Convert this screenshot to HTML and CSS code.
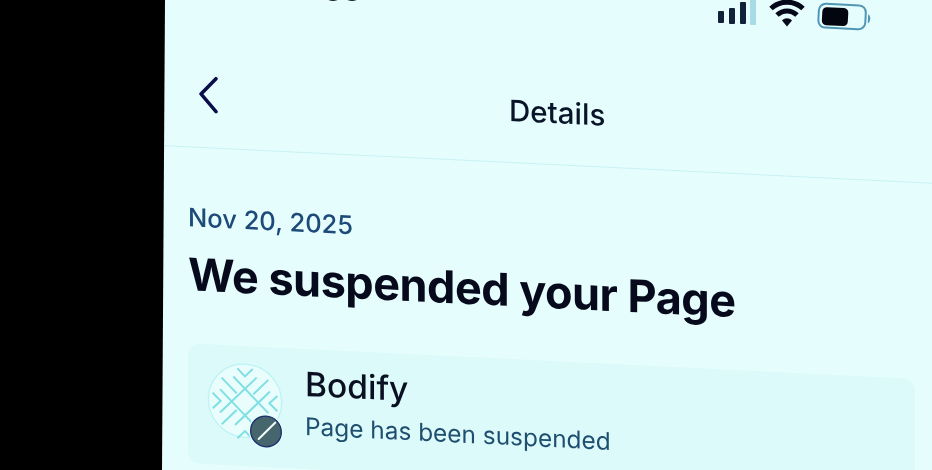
FILE: index.html
```html
<!DOCTYPE html>
<html lang="en">
<head>
<meta charset="utf-8">
<title>Details</title>
<link rel="stylesheet" href="styles.css">
</head>
<body>
<div class="screen">
  <header class="statusbar">
    <span class="time">38</span>
    <svg class="status-icons" width="160" height="34" viewBox="0 0 160 34" aria-hidden="true">
      <rect class="bar" x="0" y="10" width="6" height="12" rx="1"/>
      <rect class="bar" x="11" y="7" width="6" height="16" rx="1"/>
      <rect class="bar" x="22" y="1" width="6" height="22" rx="1"/>
      <rect class="bar-off" x="32" y="-2" width="6" height="26" rx="1"/>
      <path class="wifi" d="M53 7.5 C62 -1 76 -1 85 7.5"/>
      <path class="wifi" d="M59 14 C65 8.5 73 8.5 79 14"/>
      <path class="wifi-dot" d="M64 19.5 C67 16.5 71 16.5 74 19.5 L69 25.5 Z"/>
      <g transform="rotate(3 124 17)">
        <rect class="batt-shell" x="100.5" y="3.5" width="47" height="24" rx="7"/>
        <rect class="batt-fill" x="104" y="7" width="26" height="18" rx="4.5"/>
        <path class="batt-cap" d="M150 12 C153 13 153 20 150 21 Z"/>
      </g>
    </svg>
  </header>
  <div class="tilt">
    <nav class="nav">
      <svg class="back" width="20" height="38" viewBox="0 0 20 38" aria-hidden="true">
        <path d="M17 2 L2 18 L17 35"/>
      </svg>
      <h2 class="nav-title">Details</h2>
    </nav>
    <main class="content">
      <p class="date">Nov 20, 2025</p>
      <h1 class="headline">We suspended your Page</h1>
      <section class="card">
        <div class="avatar">
          <svg width="95" height="95" viewBox="0 0 285 285" aria-hidden="true">
            <circle class="logo-disc" cx="135" cy="128" r="110"/>
            <g class="logo-lines" transform="translate(0 -3)">
              <path d="M112 35 L135 58 L158 35"/>
              <path d="M38 112 L62 135 L38 158"/>
              <path d="M232 112 L208 135 L232 158"/>
              <path d="M112 245 L135 222 L158 245"/>
              <path d="M100 60 L205 165"/>
              <path d="M60 100 L165 205"/>
              <path d="M170 60 L60 170"/>
              <path d="M210 100 L105 205"/>
              <path d="M65 65 L110 110"/>
              <path d="M205 65 L160 110"/>
              <path d="M65 205 L110 160"/>
            </g>
            <circle class="badge-ring" cx="198" cy="217" r="52"/>
            <circle class="badge" cx="198" cy="217" r="46"/>
            <path class="badge-slash" d="M176 241 L226 189"/>
          </svg>
        </div>
        <div class="card-text">
          <h3 class="page-name">Bodify</h3>
          <p class="page-status">Page has been suspended</p>
        </div>
      </section>
    </main>
  </div>
</div>
</body>
</html>
```

FILE: styles.css
```css
* { box-sizing: border-box; }
html, body { margin: 0; height: 100%; background: #000; overflow: hidden; }
body { padding-left: 162px; font-family: Inter, "Liberation Sans", sans-serif; }

.screen {
  width: 770px;
  height: 470px;
  overflow: hidden;
  background: #e5fdfd;
  clip-path: polygon(3px 0, 100% 0, 100% 100%, 0 100%);
  filter: blur(0.45px);
}

.statusbar { height: 40px; display: flex; align-items: flex-start; overflow: hidden; padding-left: 162px; }
.time { font-size: 28px; font-weight: 700; line-height: 28px; margin-top: -23px; color: #0b1020; letter-spacing: 1px; }
.status-icons { margin-left: auto; margin-right: 54px; margin-top: 1px; overflow: visible; }
.bar { fill: #12213a; }
.bar-off { fill: #a9dbe6; }
.wifi { fill: none; stroke: #06091a; stroke-width: 5; }
.wifi-dot { fill: #06091a; }
.batt-shell { fill: none; stroke: #4f97b5; stroke-width: 2; }
.batt-fill { fill: #04060f; }
.batt-cap { fill: #4f97b5; }

.tilt { transform: skewY(2.8deg); transform-origin: 0 0; }

.nav { height: 106px; display: flex; align-items: center; padding-left: 37px; border-bottom: 1px solid #c9f1f3; }
.back { fill: none; }
.back path { fill: none; stroke: #0a0d4a; stroke-width: 3.5; stroke-linecap: round; stroke-linejoin: round; }
.nav-title { margin: 0 0 0 290px; font-size: 29.5px; font-weight: 500; color: #0a1428; }

.content { padding: 0 17px 0 26px; }
.date { margin: 54px 0 0; font-size: 25.5px; line-height: 32px; font-weight: 500; color: #1d4a78; letter-spacing: 0; }
.headline { margin: 14px 0 0; font-size: 45px; line-height: 54px; font-weight: 700; color: #070a1c; letter-spacing: -.5px; white-space: nowrap; }

.card { margin-top: 42px; height: 120px; display: flex; background: #dcfaf9; border-radius: 12px; padding: 12px 0 0 12px; }
.avatar { width: 95px; height: 95px; flex: none; }
.logo-disc { fill: #eafdfd; stroke: #bdf3f5; stroke-width: 4; }
.logo-lines path { fill: none; stroke: #7fdfe2; stroke-width: 6; }
.badge-ring { fill: #e3fcfd; }
.badge { fill: #45666c; stroke: #1c2f6e; stroke-width: 4; }
.badge-slash { stroke: #f4fbfb; stroke-width: 6; stroke-linecap: round; fill: none; }
.card-text { margin-left: 10px; }
.page-name { margin: 1px 0 0; font-size: 33.5px; line-height: 44px; font-weight: 500; color: #0a0f22; }
.page-status { margin: 4px 0 0; font-size: 24.4px; line-height: 32px; color: #1f4f70; }
```
